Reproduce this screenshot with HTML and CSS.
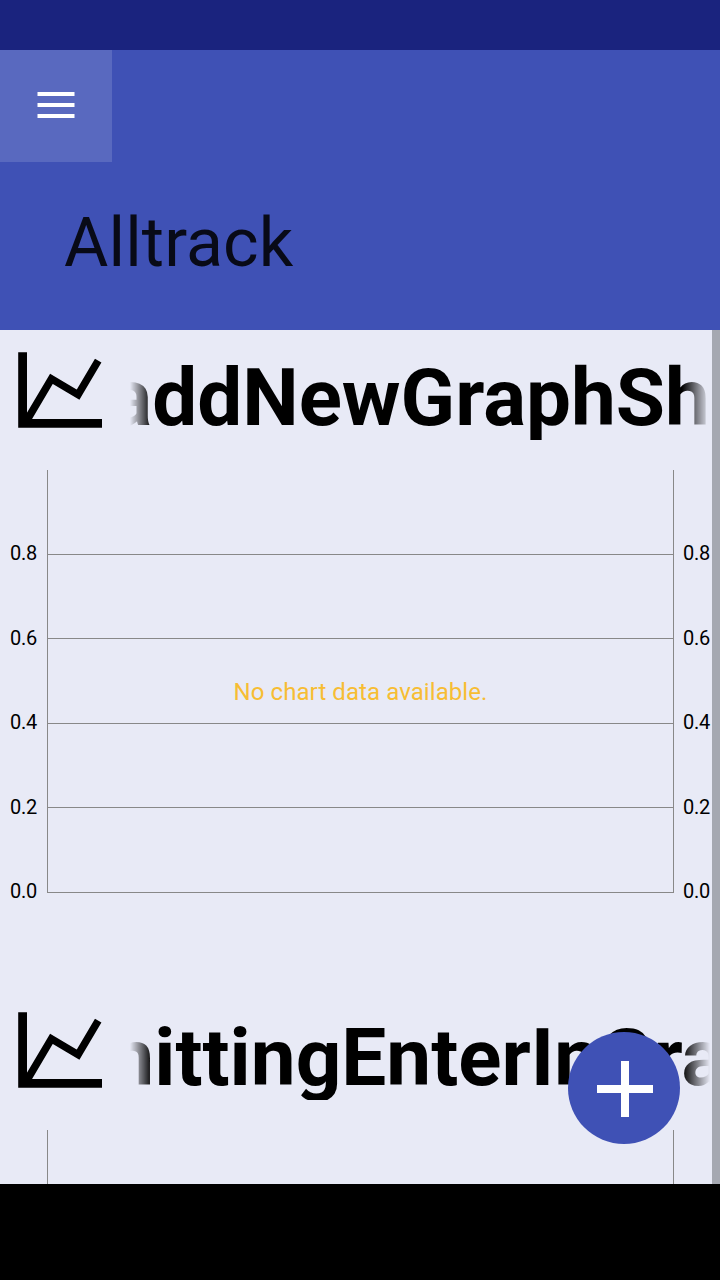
FILE: index.html
```html
<!DOCTYPE html>
<html lang="en">
<head>
<meta charset="utf-8">
<title>Alltrack</title>
<link rel="stylesheet" href="styles.css">
</head>
<body>
<div class="screen">
  <div class="status-bar"></div>
  <header class="app-bar">
    <button class="menu-button" aria-label="Menu">
      <svg width="38" height="26" viewBox="0 0 38 26" fill="#fff"><path d="M.5 0h37v4H.5zM.5 11h37v4H.5zM.5 22h37v4H.5z"/></svg>
    </button>
    <h1 class="app-title">Alltrack</h1>
  </header>
  <main class="content">
    <div class="list">
      <section class="card">
        <div class="card-header">
          <svg class="card-icon" width="120" height="110" viewBox="0 0 120 110"><path d="M18.2 22.2H27V89h75v8.7H18.2z"/><path d="M25.3 93L51.4 48.8 78.1 64.7 98.2 30.7" fill="none" stroke="#000" stroke-width="7.5"/></svg>
          <div class="marquee"><span class="marquee-text first">addNewGraphSh</span></div>
        </div>
        <div class="chart">
          <div class="axis left"><div class="tick"></div><div class="tick tall"><span>0.8</span></div><div class="tick"><span>0.6</span></div><div class="tick tall"><span>0.4</span></div><div class="tick"><span>0.2</span></div><div class="tick base"><span>0.0</span></div></div>
          <div class="plot"><i class="row tall"></i><i class="row"></i><i class="row tall"></i><i class="row"></i><i class="row tall"></i><p class="empty">No chart data available.</p></div>
          <div class="axis right"><div class="tick"></div><div class="tick tall"><span>0.8</span></div><div class="tick"><span>0.6</span></div><div class="tick tall"><span>0.4</span></div><div class="tick"><span>0.2</span></div><div class="tick base"><span>0.0</span></div></div>
        </div>
      </section>
      <section class="card">
        <div class="card-header">
          <svg class="card-icon" width="120" height="110" viewBox="0 0 120 110"><path d="M18.2 22.2H27V89h75v8.7H18.2z"/><path d="M25.3 93L51.4 48.8 78.1 64.7 98.2 30.7" fill="none" stroke="#000" stroke-width="7.5"/></svg>
          <div class="marquee"><span class="marquee-text second">mittingEnterInGra</span></div>
        </div>
        <div class="chart">
          <div class="axis left"></div>
          <div class="plot"><i class="row tall"></i></div>
          <div class="axis right"></div>
        </div>
      </section>
    </div>
    <div class="scrollbar"></div>
    <button class="fab" aria-label="Add">
      <svg width="112" height="112" viewBox="0 0 112 112" fill="#fff"><path d="M53 29h8v24h24v8H61v24h-8V61H29v-8h24z"/></svg>
    </button>
  </main>
  <div class="nav-bar"></div>
</div>
</body>
</html>
```
FILE: styles.css
```css
* {
  box-sizing: border-box;
  margin: 0;
  padding: 0;
}

body {
  font-family: Roboto, sans-serif;
  background: #000;
}

button {
  border: 0;
}

svg {
  display: block;
}

.screen {
  display: flex;
  flex-direction: column;
  width: 720px;
  height: 1280px;
  overflow: hidden;
}

.status-bar {
  height: 50px;
  background: #1a237e;
}

.app-bar {
  height: 280px;
  background: #3f51b5;
}

.menu-button {
  display: flex;
  align-items: center;
  justify-content: center;
  width: 112px;
  height: 112px;
  padding-bottom: 2px;
  background: #5969bf;
}

.app-title {
  padding: 41px 0 0 64px;
  font-size: 68px;
  font-weight: 400;
  line-height: 80px;
  letter-spacing: 0.12px;
  color: #080a17;
}

.content {
  position: relative;
  display: flex;
  height: 854px;
  overflow: hidden;
  background: #e8eaf6;
}

.list {
  width: 712px;
}

.card {
  height: 660px;
}

.card-header {
  display: flex;
  height: 110px;
}

.card-icon {
  flex: none;
}

.marquee {
  width: 580px;
  height: 110px;
  margin-left: 10px;
  padding-top: 21px;
  overflow: hidden;
  white-space: nowrap;
  -webkit-mask-image: linear-gradient(to right, transparent, #000 22px, #000 552px, transparent);
  mask-image: linear-gradient(to right, transparent, #000 22px, #000 552px, transparent);
}

.marquee-text {
  display: block;
  font-size: 80px;
  font-weight: 700;
  line-height: 94px;
  color: #000;
}

.first {
  margin-left: -20.7px;
}

.second {
  margin-left: -45px;
}

.chart {
  display: flex;
  height: 423px;
  margin-top: 30px;
}

.axis {
  width: 47px;
  font-size: 20px;
  line-height: 20px;
  letter-spacing: -0.2px;
  color: #000;
}

.axis.left {
  padding-left: 10px;
}

.axis.right {
  width: 38px;
  padding-left: 9px;
}

.tick {
  height: 84px;
}

.tick:first-child {
  height: 73px;
}

.tick.tall {
  height: 85px;
}

.tick.base {
  height: 20px;
}

.plot {
  position: relative;
  width: 627px;
  border: solid #888;
  border-width: 0 1px;
}

.row {
  display: block;
  height: 84px;
  border-bottom: 1px solid #888;
}

.row.tall {
  height: 85px;
}

.empty {
  position: absolute;
  top: 208px;
  left: 0;
  width: 100%;
  text-align: center;
  font-size: 24px;
  line-height: 28px;
  letter-spacing: 0.08px;
  color: #f7bd33;
}

.scrollbar {
  width: 8px;
  background: #a5a8b1;
}

.fab {
  position: absolute;
  right: 40px;
  bottom: 40px;
  width: 112px;
  height: 112px;
  border-radius: 50%;
  background: #3f51b5;
}

.nav-bar {
  height: 96px;
  background: #000;
}
```
